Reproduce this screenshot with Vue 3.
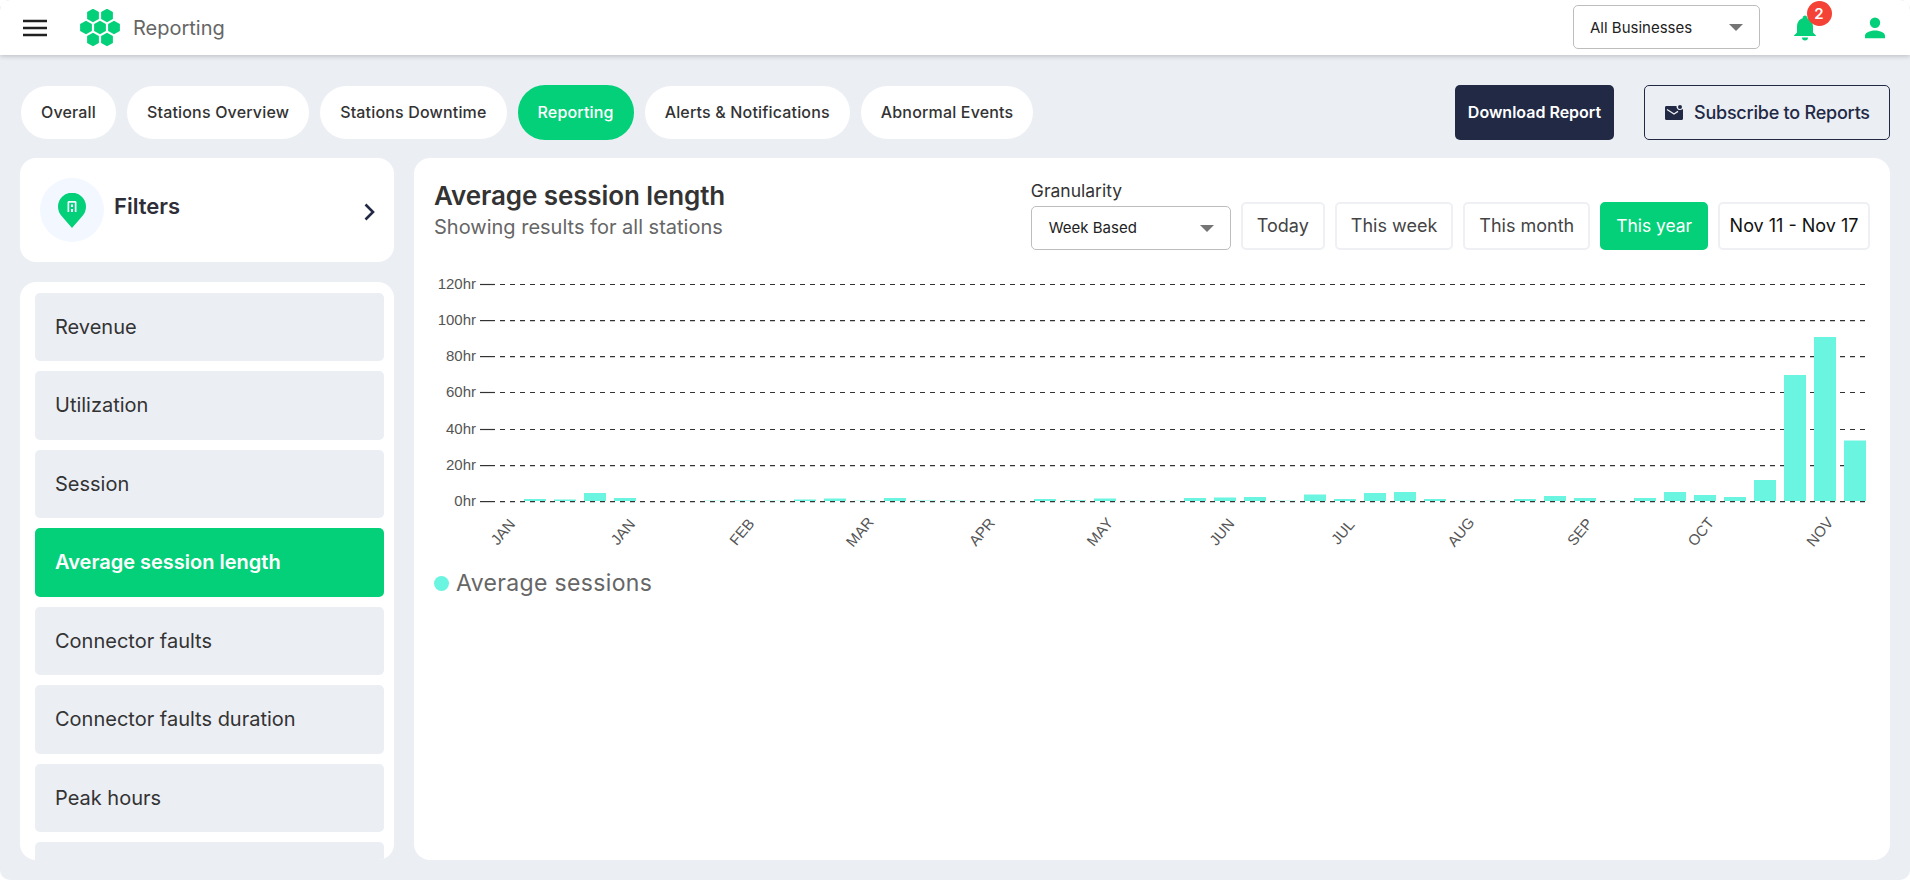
<script setup>
const tabs = ['Overall', 'Stations Overview', 'Stations Downtime', 'Reporting', 'Alerts & Notifications', 'Abnormal Events']
const items = ['Revenue', 'Utilization', 'Session', 'Average session length', 'Connector faults', 'Connector faults duration', 'Peak hours', '']
const ranges = ['Today', 'This week', 'This month', 'This year', 'Nov 11 - Nov 17']
const grid = [
  { l: '120hr', y: 284.5 }, { l: '100hr', y: 320.6 }, { l: '80hr', y: 356.6 }, { l: '60hr', y: 392.5 },
  { l: '40hr', y: 429.5 }, { l: '20hr', y: 465.6 }, { l: '0hr', y: 501.6 }
].map(g => ({ ...g, y: g.y - 262 }))
const heights = [2, 1.5, 8, 3, 0, 0, .3, .5, .3, 1.5, 2.5, .3, 3, .5, .3, .1, .1, 2, .8, 2.5, .2, .2, 3, 3.5, 4, .3, 6.5, 2, 8, 9, 2, .2, .2, 2, 5, 3, .2, 3, 9, 6, 4, 21, 126, 164, 60.5]
const bars = heights.map((h, i) => ({ x: 524 + 30 * i - 414, h, y: 239 - h }))
const months = [['JAN', 503], ['JAN', 623], ['FEB', 742], ['MAR', 860], ['APR', 982], ['MAY', 1100], ['JUN', 1222], ['JUL', 1343], ['AUG', 1461], ['SEP', 1580], ['OCT', 1701], ['NOV', 1820]]
  .map(([l, x]) => ({ l, x: x - 414, y: 270 }))
const hexes = [[13, 6.5], [27, 6.5], [6, 18.5], [20, 18.5], [34, 18.5], [13, 30.5], [27, 30.5]]
const hexPts = ([x, y]) => `${x},${y - 6.8} ${x + 5.9},${y - 3.4} ${x + 5.9},${y + 3.4} ${x},${y + 6.8} ${x - 5.9},${y + 3.4} ${x - 5.9},${y - 3.4}`
</script>

<template>
  <div class="page">
    <header class="top">
      <div class="top-left">
        <svg class="burger" width="24" height="18" viewBox="0 0 24 18"><path d="M0 2h24M0 9h24M0 16h24" stroke="#212121" stroke-width="2.4" /></svg>
        <svg class="logo" width="40" height="38" viewBox="0 0 40 38" fill="#05d07a">
          <polygon v-for="(p, i) in hexes" :key="i" :points="hexPts(p)" />
        </svg>
        <span class="app-name">Reporting</span>
      </div>
      <div class="top-right">
        <div class="select biz"><span>All Businesses</span><i class="caret"></i></div>
        <div class="bell">
          <svg width="26" height="26" viewBox="0 0 26 26" fill="#05d07a"><path d="M13 .5c-1.300 0-2.300 1-2.300 2.200v.6C6.800 4.300 5 7.800 5 12v5.500l-3 3v.5h22v-.5l-3-3V12c0-4.200-1.800-7.700-5.700-8.700v-.6C15.300 1.500 14.300.5 13 .5z" /><path d="M10 22.500h6a3 3 0 0 1-6 0z" /></svg>
          <b class="badge">2</b>
        </div>
        <svg class="user" width="24" height="24" viewBox="0 0 24 24" fill="#05d07a"><path d="M12 12a5.200 5.200 0 1 0 0-10.400A5.200 5.200 0 0 0 12 12zm0 2.600c-3.500 0-10 1.700-10 5.100v2.600h20v-2.600c0-3.400-6.500-5.100-10-5.100z" /></svg>
      </div>
    </header>

    <div class="bar">
      <nav class="tabs">
        <button v-for="t in tabs" :key="t" class="tab" :class="{ on: t === 'Reporting' }">{{ t }}</button>
      </nav>
      <div class="actions">
        <button class="dl">Download Report</button>
        <button class="sub">
          <svg width="18" height="15" viewBox="0 0 18 15" fill="#222945"><path d="M0 2.500C0 1.700.6 1 1.400 1h10.100a3.500 3.500 0 0 0 4.500 3.800 4 4 0 0 0 2-.8v9.500c0 .8-.6 1.500-1.400 1.500H1.400C.6 15 0 14.300 0 13.500z" /><circle cx="15" cy="2" r="2" /><path d="M2 4.500l7 4.500 4-2.600" stroke="#ebeef3" stroke-width="1.300" fill="none" /></svg>
          Subscribe to Reports
        </button>
      </div>
    </div>

    <div class="body">
      <aside class="side">
        <div class="filters">
          <span class="pin">
            <svg width="28" height="35" viewBox="0 0 28 35"><path d="M14 35 4 23.500A14 14 0 1 1 24 23.500z" fill="#05d07a" /><path fill-rule="evenodd" d="M9.500 19V9l1-1h7l1 1v10zM11.200 9.800V19h5.600V9.800z" fill="#f3f7ff" /><path d="M13 11.500h2v2.500h-2zM13 16h2v3h-2z" fill="#f3f7ff" /></svg>
          </span>
          <span class="f-label">Filters</span>
          <svg class="chev" width="11" height="18" viewBox="0 0 11 18"><path d="M1.500 1.500 9 9l-7.500 7.500" fill="none" stroke="#222945" stroke-width="2.600" /></svg>
        </div>
        <div class="list">
          <div v-for="(m, i) in items" :key="i" class="item" :class="{ on: m === 'Average session length' }">{{ m }}</div>
        </div>
      </aside>

      <main class="card">
        <div class="head">
          <div>
            <h1>Average session length</h1>
            <p>Showing results for all stations</p>
          </div>
          <div class="controls">
            <div class="gran">
              <label>Granularity</label>
              <div class="select week"><span>Week Based</span><i class="caret"></i></div>
            </div>
            <button v-for="r in ranges" :key="r" class="range" :class="{ on: r === 'This year', date: r.startsWith('Nov') }">{{ r }}</button>
          </div>
        </div>
        <svg class="chart" width="1476" height="300" viewBox="0 0 1476 300">
          <g v-for="g in grid" :key="g.l">
            <text class="yl" x="62" :y="Math.round(g.y) + 3.5" text-anchor="end">{{ g.l }}</text>
            <path :d="`M66 ${g.y}H81`" stroke="#333" stroke-width="1.2" />
            <path :d="`M86 ${g.y}H1451`" stroke="#333" stroke-width="1.2" stroke-dasharray="5 5" />
          </g>
          <rect v-for="(b, i) in bars" :key="i" :x="b.x" :y="b.y" width="22" :height="b.h" fill="#6af5e1" />
          <text v-for="m in months" :key="m.l + m.x" class="xl" :transform="`translate(${m.x} ${m.y}) rotate(-50)`" text-anchor="middle" dy="5">{{ m.l }}</text>
        </svg>
        <div class="legend"><i></i><span>Average sessions</span></div>
      </main>
    </div>
  </div>
</template>

<style>
html, body { margin: 0; background: #fff; }
</style>

<style scoped>
.page { width: 1910px; height: 880px; background: #ebeef3; border-radius: 10px; overflow: hidden; font-family: Inter, "Liberation Sans", sans-serif; color: #333; box-sizing: border-box; }
.top { height: 55px; background: #fff; box-shadow: 0 1px 5px rgba(0,0,0,.22); display: flex; justify-content: space-between; align-items: center; padding: 0 23px 0 23px; position: relative; }
.top-left, .top-right { display: flex; align-items: center; }
.logo { margin-left: 33px; }
.app-name { margin-left: 13px; font-size: 20px; color: #666; }
.select { display: flex; align-items: center; justify-content: space-between; background: #fff; border: 1px solid #bdbdbd; border-radius: 5px; box-sizing: border-box; color: #222; }
.biz { width: 187px; height: 44px; padding: 0 16px; font-size: 15px; margin-top: -1px; }
.caret { width: 0; height: 0; border-left: 7px solid transparent; border-right: 7px solid transparent; border-top: 7px solid #757575; }
.bell { position: relative; margin-left: 32px; height: 26px; margin-top: 1px; }
.bell svg { display: block; }
.badge { position: absolute; left: 14.5px; top: -14.5px; width: 25px; height: 25px; border-radius: 50%; background: #f44336; color: #fff; font-size: 15px; font-weight: 600; display: flex; align-items: center; justify-content: center; }
.user { margin-left: 45px; }
.bar { display: flex; justify-content: space-between; align-items: center; padding: 30px 20px 0 21px; height: 55px; }
.tabs { display: flex; gap: 11px; align-items: center; }
button { font-family: inherit; cursor: pointer; }
.tab { height: 53px; padding: 0 20px 2px; border: 0; border-radius: 27px; background: #fff; color: #333; font-size: 16px; font-weight: 500; letter-spacing: .17px; }
.tab.on { height: 55px; background: #05d07a; color: #fff; }
.actions { display: flex; gap: 30px; }
.dl { width: 159px; height: 55px; padding: 0 0 2px; border: 0; border-radius: 5px; background: #222945; color: #fff; font-size: 16px; font-weight: 600; }
.sub { width: 246px; height: 55px; border: 1px solid #222945; border-radius: 5px; background: transparent; color: #222945; font-size: 18px; font-weight: 500; letter-spacing: -.23px; display: flex; align-items: center; gap: 11px; padding: 0 0 0 20px; white-space: nowrap; }
.body { display: flex; gap: 20px; padding: 18px 20px 0; height: 702px; }
.side { width: 374px; display: flex; flex-direction: column; gap: 20px; flex: none; }
.filters { height: 104px; background: #fff; border-radius: 16px; display: flex; align-items: center; padding: 0 20px; box-sizing: border-box; flex: none; }
.pin { width: 64px; height: 64px; border-radius: 50%; background: #f3f7ff; display: flex; align-items: center; justify-content: center; }
.f-label { margin: -8px 0 0 10px; font-size: 22px; font-weight: 600; color: #2e2e38; flex: 1; }
.chev { margin-right: -1px; margin-top: 4px; }
.list { flex: 1; min-height: 0; overflow: hidden; background: #fff; border-radius: 16px; padding: 10.6px 10px 0 15px; display: flex; flex-direction: column; gap: 10px; }
.item { flex: none; height: 68.5px; border-radius: 5px; background: #ebeef3; display: flex; align-items: center; padding-left: 20px; font-size: 20px; color: #333; }
.item.on { background: #05d07a; color: #fff; font-weight: 600; }
.card { flex: 1; background: #fff; border-radius: 16px; padding: 0; position: relative; min-width: 0; }
.head { display: flex; justify-content: space-between; padding: 24px 20px 0 20px; height: 104px; box-sizing: border-box; }
h1 { margin: -1px 0 0; font-size: 26px; line-height: 30px; font-weight: 600; color: #333; letter-spacing: -.1px; }
.head p { margin: 5px 0 0; font-size: 20px; line-height: 22px; color: #666; }
.controls { display: flex; align-items: flex-end; gap: 10px; height: 70px; }
.gran { display: flex; flex-direction: column; gap: 5px; margin-bottom: 2px; }
.gran label { font-size: 17.5px; line-height: 20px; color: #333; }
.week { width: 200px; height: 44px; padding: 0 16px 2px 17px; font-size: 15px; }
.week .caret { margin-top: 2px; }
.range { height: 48px; padding: 0 14px 2px; background: #fff; border: 2px solid #eef0f4; border-radius: 5px; font-size: 18px; color: #444; margin-bottom: 2px; }
.range.on { background: #05d07a; border-color: #05d07a; color: #fff; font-size: 17.4px; padding: 0 14px 2px; }
.range.date { color: #111; padding: 0 9.5px 2px; }
.chart { display: block; }
.yl { font: 15px "Liberation Sans", sans-serif; fill: #555; }
.xl { font: 15px "Liberation Sans", sans-serif; fill: #555; }
.legend { display: flex; align-items: center; gap: 7px; padding-left: 20px; margin-top: 7px; }
.legend i { width: 15px; height: 15px; border-radius: 50%; background: #6af5e1; }
.legend span { font-size: 23px; letter-spacing: .35px; color: #666; }
</style>
